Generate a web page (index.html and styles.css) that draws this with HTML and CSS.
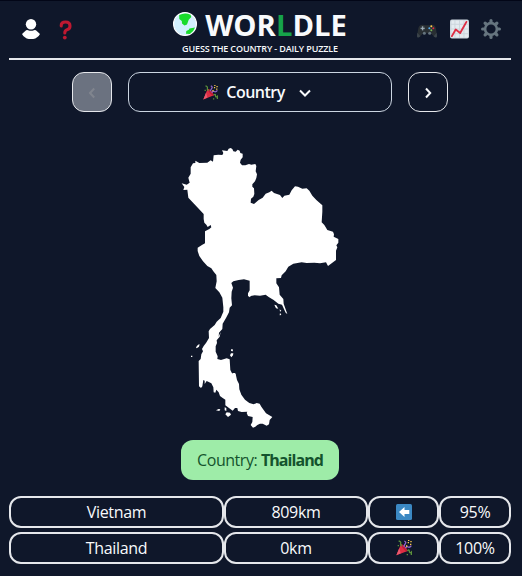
FILE: index.html
```html
<!DOCTYPE html>
<html lang="en">
<head>
<meta charset="utf-8">
<title>Worldle</title>
<link rel="stylesheet" href="styles.css">
</head>
<body>
<svg class="defs" width="0" height="0">
  <symbol id="party" viewBox="0 0 48 48">
    <path d="M1 46 15 12Q29 18 35 33Z" fill="#dd2e44"/>
    <path d="M1 46 10 24 14 40Z" fill="#ea596e"/>
    <path d="M15 12Q28 16 35 33Q30 36 23 27Q14 17 15 12Z" fill="#c01c35"/>
    <path d="M8 3q8 2 6 7t4 8M34 32q6-5 6 2t6 2v9" fill="none" stroke="#5c913b" stroke-width="4"/>
    <path d="M25 3q7 3 3 8t-4 9M28 25q3-7 8-4t10-4" fill="none" stroke="#9266cc" stroke-width="4"/>
    <path d="M35 6h4v4h-4zM43 3h4v4h-4zM42 11h4v4h-4zM36 0h4v3h-4zM30 16h4v4h-4z" fill="#ffcc4d"/>
    <path d="M5 15h4v4H5zM32 42h4v4h-4z" fill="#5c913b"/>
  </symbol>
</svg>
<div class="app">
  <header class="header">
    <div class="left">
      <svg class="user" viewBox="0 0 18 20"><circle cx="9" cy="5.2" r="5.2" fill="#fff"/><path d="M3 12.200Q4.500 10.700 6 11.200Q9 12.500 12 11.200Q13.500 10.700 15 12.200L18 15Q15 20.200 9 20.200T0 15Z" fill="#fff"/></svg>
      <svg class="question" viewBox="0 0 12 20"><path d="M1.700 6Q1.500 2 6 2Q10.500 2 10.500 6Q10.500 9 7.500 9.800Q5.300 10.400 5.300 13" fill="none" stroke="#be1931" stroke-width="3.100" stroke-linecap="round"/><circle cx="5.300" cy="17.600" r="1.900" fill="#be1931"/></svg>
    </div>
    <div class="brand">
      <h1 class="title">
        <svg class="globe" viewBox="0 0 24 24"><circle cx="12" cy="12" r="11.400" fill="#d2effd" stroke="#fff" stroke-width="1.200"/><path d="M6.200 3Q12 0 17.500 2.700L18.300 5 15.700 7.700 14 12.500 11.500 13.500 9 11.500 8.800 9 6.300 7Z" fill="#19db2b"/><path d="M22 15.500Q20.500 20 16.800 22L13 21.800 13.300 19 15.800 17.800 16.500 16.600Z" fill="#19db2b"/></svg>
        <span class="word">WOR<span class="accent">L</span>DLE</span>
      </h1>
      <p class="tagline">GUESS THE COUNTRY - DAILY PUZZLE</p>
    </div>
    <div class="right">
      <svg class="pad" viewBox="0 0 60 40"><path d="M4 12Q6 1 17 1L25 3H36L44 1Q55 1 57 13L60 35Q59 41 52 38L42 27H18L8 38Q1 41 0 35Z" fill="#292f33"/><path d="M1 25 10 36Q0 44 0 34ZM59 25 50 36Q60 44 60 34Z" fill="#3b444b"/><circle cx="17" cy="12" r="7" fill="#3a434b"/><path d="M17 6v12M11 12h12" stroke="#a8b7c1" stroke-width="3"/><circle cx="22" cy="27" r="4.500" fill="#66757f"/><circle cx="38" cy="27" r="4.500" fill="#66757f"/><circle cx="43" cy="6" r="3" fill="#ffcc4d"/><circle cx="37" cy="12" r="3" fill="#55acee"/><circle cx="49" cy="12" r="3" fill="#dd2e44"/><circle cx="43" cy="18" r="3" fill="#77b255"/></svg>
      <svg class="chart" viewBox="0 0 20 20"><rect width="20" height="20" rx="2" fill="#ccd6dd"/><path d="M1.500 1h3.200v3.500H1.500zM5.700 1h3.800v3.500H5.700zM10.500 1h3.700v3.500h-3.700zM15.200 1H19v3.500h-3.800zM1.500 5.500h3.200v4H1.500zM5.700 5.500h3.800v4H5.700zM10.500 5.500h3.700v4h-3.700zM15.200 5.500H19v4h-3.800zM1.500 10.500h3.200v4H1.500zM5.700 10.500h3.800v4H5.700zM10.500 10.500h3.700v4h-3.700zM15.200 10.500H19v4h-3.800zM1.500 15.500h3.200V19H1.500zM5.700 15.500h3.800V19H5.700zM10.500 15.500h3.700V19h-3.700zM15.200 15.500H19V19h-3.800z" fill="#e4ebf0"/><path d="M2 17.500 6 10.500 10.700 14.300 17.300 2.500" fill="none" stroke="#dd2e44" stroke-width="2" stroke-linecap="round" stroke-linejoin="round"/></svg>
      <svg class="gear" viewBox="-10 -10 20 20"><g stroke="#66757f" stroke-width="3.200" stroke-linecap="round"><path d="M0-8.400V-7M0 8.400V7M-8.400 0H-7M8.400 0H7M-5.900-5.900-5-5M5.900 5.900 5 5M-5.900 5.900-5 5M5.900-5.900 5-5"/></g><circle r="5.900" fill="none" stroke="#66757f" stroke-width="2.600"/></svg>
    </div>
  </header>
  <nav class="nav">
    <button class="step disabled"><svg viewBox="0 0 16 16"><path d="M10.200 3.500 6 8l4.200 4.500"/></svg></button>
    <button class="picker"><svg class="party"><use href="#party"/></svg><span class="label">Country</span><svg class="chevron" viewBox="0 0 16 16"><path d="M3 5.500 8 10.500l5-5"/></svg></button>
    <button class="step"><svg viewBox="0 0 16 16"><path d="M6 3.500 10.200 8 6 12.500"/></svg></button>
  </nav>
  <svg class="map" viewBox="0 0 540 885" fill="#fff">
    <path d="M182 24 187 27 190 34 197 35 203 29 209 32 211 39 218 41 218 52 212 59 210 68 216 76 226 76 237 72 244 74 256 72 259 78 257 94 261 103 259 114 255 124 247 133 247 140 252 145 253 162 250 170 243 176 242 188 252 192 266 180 278 173 287 161 298 157 305 152 312 159 330 165 337 174 343 167 358 164 365 151 375 139 384 140 397 146 410 145 418 152 427 167 439 180 457 196 457 215 455 247 463 255 472 270 489 275 492 283 491 290 505 297 505 308 499 316 502 322 498 332 498 360 486 369 474 378 468 367 450 370 433 368 410 369 395 367 370 371 355 380 347 394 335 406 333 414 319 415 319 430 327 442 329 464 340 477 341 491 352 522 347 518 336 494 325 491 311 480 296 471 287 464 270 467 254 466 242 468 240 472 234 468 234 460 239 451 239 422 222 418 206 420 190 424 184 429 189 443 185 455 184 475 186 496 179 503 177 517 168 534 158 551 157 567 147 578 146 590 152 576 149 590 140 601 141 609 137 619 137 635 143 649 142 657 153 660 170 655 179 658 181 690 186 700 197 702 201 720 207 732 208 748 214 764 225 779 238 789 251 793 260 789 269 791 274 800 288 820 307 831 299 840 297 853 290 857 278 851 270 851 262 855 256 860 249 863 242 855 247 846 248 831 234 828 230 819 232 815 215 816 204 813 202 804 195 804 188 812 177 804 166 796 166 779 157 773 150 768 146 757 139 749 136 758 131 757 130 742 124 730 110 723 104 732 104 722 100 720 97 739 93 744 87 739 86 663 92 657 94 643 99 634 96 627 101 618 108 609 117 594 116 574 120 567 134 555 140 545 152 534 160 515 160 502 157 473 148 457 136 444 140 424 139 405 130 394 124 385 112 378 99 364 88 348 83 333 83 323 97 314 105 310 105 274 118 267 124 262 122 255 113 261 109 254 103 248 101 237 101 222 72 191 55 173 52 149 40 150 43 141 35 130 50 134 59 128 55 113 62 101 62 82 69 70 76 69 76 62 88 69 112 68 122 61 129 65 131 46 145 44 157 45 160 39 156 31 172 33 176 26Z"/>
    <path d="M313 494 319 496 325 506 318 505ZM329 508 334 512 330 515ZM330 518 334 525 329 526ZM78 622 84 614 89 613 87 620 80 625ZM63 647h4v4h-4ZM184 627l4 1 1 6-6-1ZM183 640l7 0-1 6-5 6-4-6ZM188 699h8v6h-5ZM138 811l8-4 5 1-3 5ZM164 802l5 2 0 9-5-2ZM170 817l10 1 3 6-9 7-8-8Z"/>
  </svg>
  <div class="answer">Country: <b>Thailand</b></div>
  <div class="guesses">
    <div class="cell">Vietnam</div><div class="cell">809km</div>
    <div class="cell"><svg class="arrow" viewBox="0 0 16 16"><rect width="16" height="16" rx="1.500" fill="#3b88c3"/><path d="M3 8 8.500 3V6H13.300V10H8.500V13Z" fill="#fff"/></svg></div>
    <div class="cell">95%</div>
    <div class="cell">Thailand</div><div class="cell">0km</div>
    <div class="cell"><svg class="party"><use href="#party"/></svg></div>
    <div class="cell">100%</div>
  </div>
</div>
</body>
</html>
```
FILE: styles.css
```css
* { box-sizing: border-box; }
body {
  margin: 0;
  background: #0f172a;
  color: #f8fafc;
  font: 16px/24px "Open Sans", "Noto Sans", sans-serif;
}
svg { display: block; flex: none; }
.defs { position: absolute; }
.app {
  height: 576px;
  padding: 0 11px 0 9px;
  border-top: 1px solid #020617;
  display: flex;
  flex-direction: column;
  align-items: center;
}
.header {
  width: 100%;
  height: 59px;
  flex: none;
  display: grid;
  grid-template-columns: 1fr 180px 1fr;
  border-bottom: 2px solid #e5e7eb;
}
.left, .right { display: flex; height: 56px; align-items: center; }
.left { padding-left: 13px; gap: 19px; }
.right { justify-content: flex-end; padding-right: 10px; }
.user { width: 18px; height: 20px; }
.question { width: 13px; height: 20px; margin-top: 1px; }
.pad { width: 20px; height: 14px; margin: 3px 13px 0 0; }
.chart { width: 19px; height: 20px; margin-right: 12px; }
.gear { width: 20px; height: 20px; }
.brand { display: flex; flex-direction: column; align-items: center; }
.title {
  display: flex;
  margin: 6px 0 0;
  height: 36px;
  font-size: 29.2px;
  line-height: 36px;
  font-weight: 700;
}
.globe { width: 24px; height: 24px; margin: 5px 8px 0 0; }
.word { white-space: nowrap; }
.accent { color: #16a34a; }
.tagline {
  margin: 0;
  font-size: 9px;
  line-height: 12px;
  font-weight: 600;
  letter-spacing: -0.14px;
  white-space: nowrap;
}
.nav { display: flex; gap: 16px; margin-top: 12px; }
.nav button {
  height: 40px;
  padding: 0;
  border: 1px solid #e5e7eb;
  border-radius: 12px;
  background: none;
  color: #f8fafc;
  display: flex;
  align-items: center;
  justify-content: center;
  font: inherit;
}
.nav .step { width: 40px; }
.nav .disabled { background: #6b7280; color: #80858e; }
.nav .picker { width: 264px; border-color: #cbd5e1; padding-right: 4px; }
.step svg, .chevron {
  width: 16px;
  height: 16px;
  margin-top: 1px;
  fill: none;
  stroke: currentColor;
  stroke-width: 2;
}
.step svg { margin-top: 2px; }
.label { margin: 0 12px 0 8px; font-weight: 600; letter-spacing: -0.5px; }
.party { width: 16px; height: 16px; }
.picker .party { width: 15px; height: 15px; margin-top: 1px; }
.map { width: 180px; height: 295px; margin-top: 28px; }
.answer {
  width: 158px;
  height: 40px;
  flex: none;
  margin-top: 5px;
  border-radius: 12px;
  background: #9eeca8;
  color: #14532d;
  line-height: 41px;
  text-align: center;
  letter-spacing: -0.45px;
  white-space: nowrap;
}
.answer b { letter-spacing: -0.95px; }
.guesses {
  width: 100%;
  margin-top: 16px;
  display: grid;
  grid-template-columns: 215px 144px 71px 72px;
  grid-auto-rows: 32px;
  row-gap: 4px;
}
.cell {
  display: flex;
  align-items: center;
  justify-content: center;
  border: 2px solid #e5e7eb;
  border-radius: 12px;
  letter-spacing: -0.3px;
}
.arrow { width: 16px; height: 16px; }
```
